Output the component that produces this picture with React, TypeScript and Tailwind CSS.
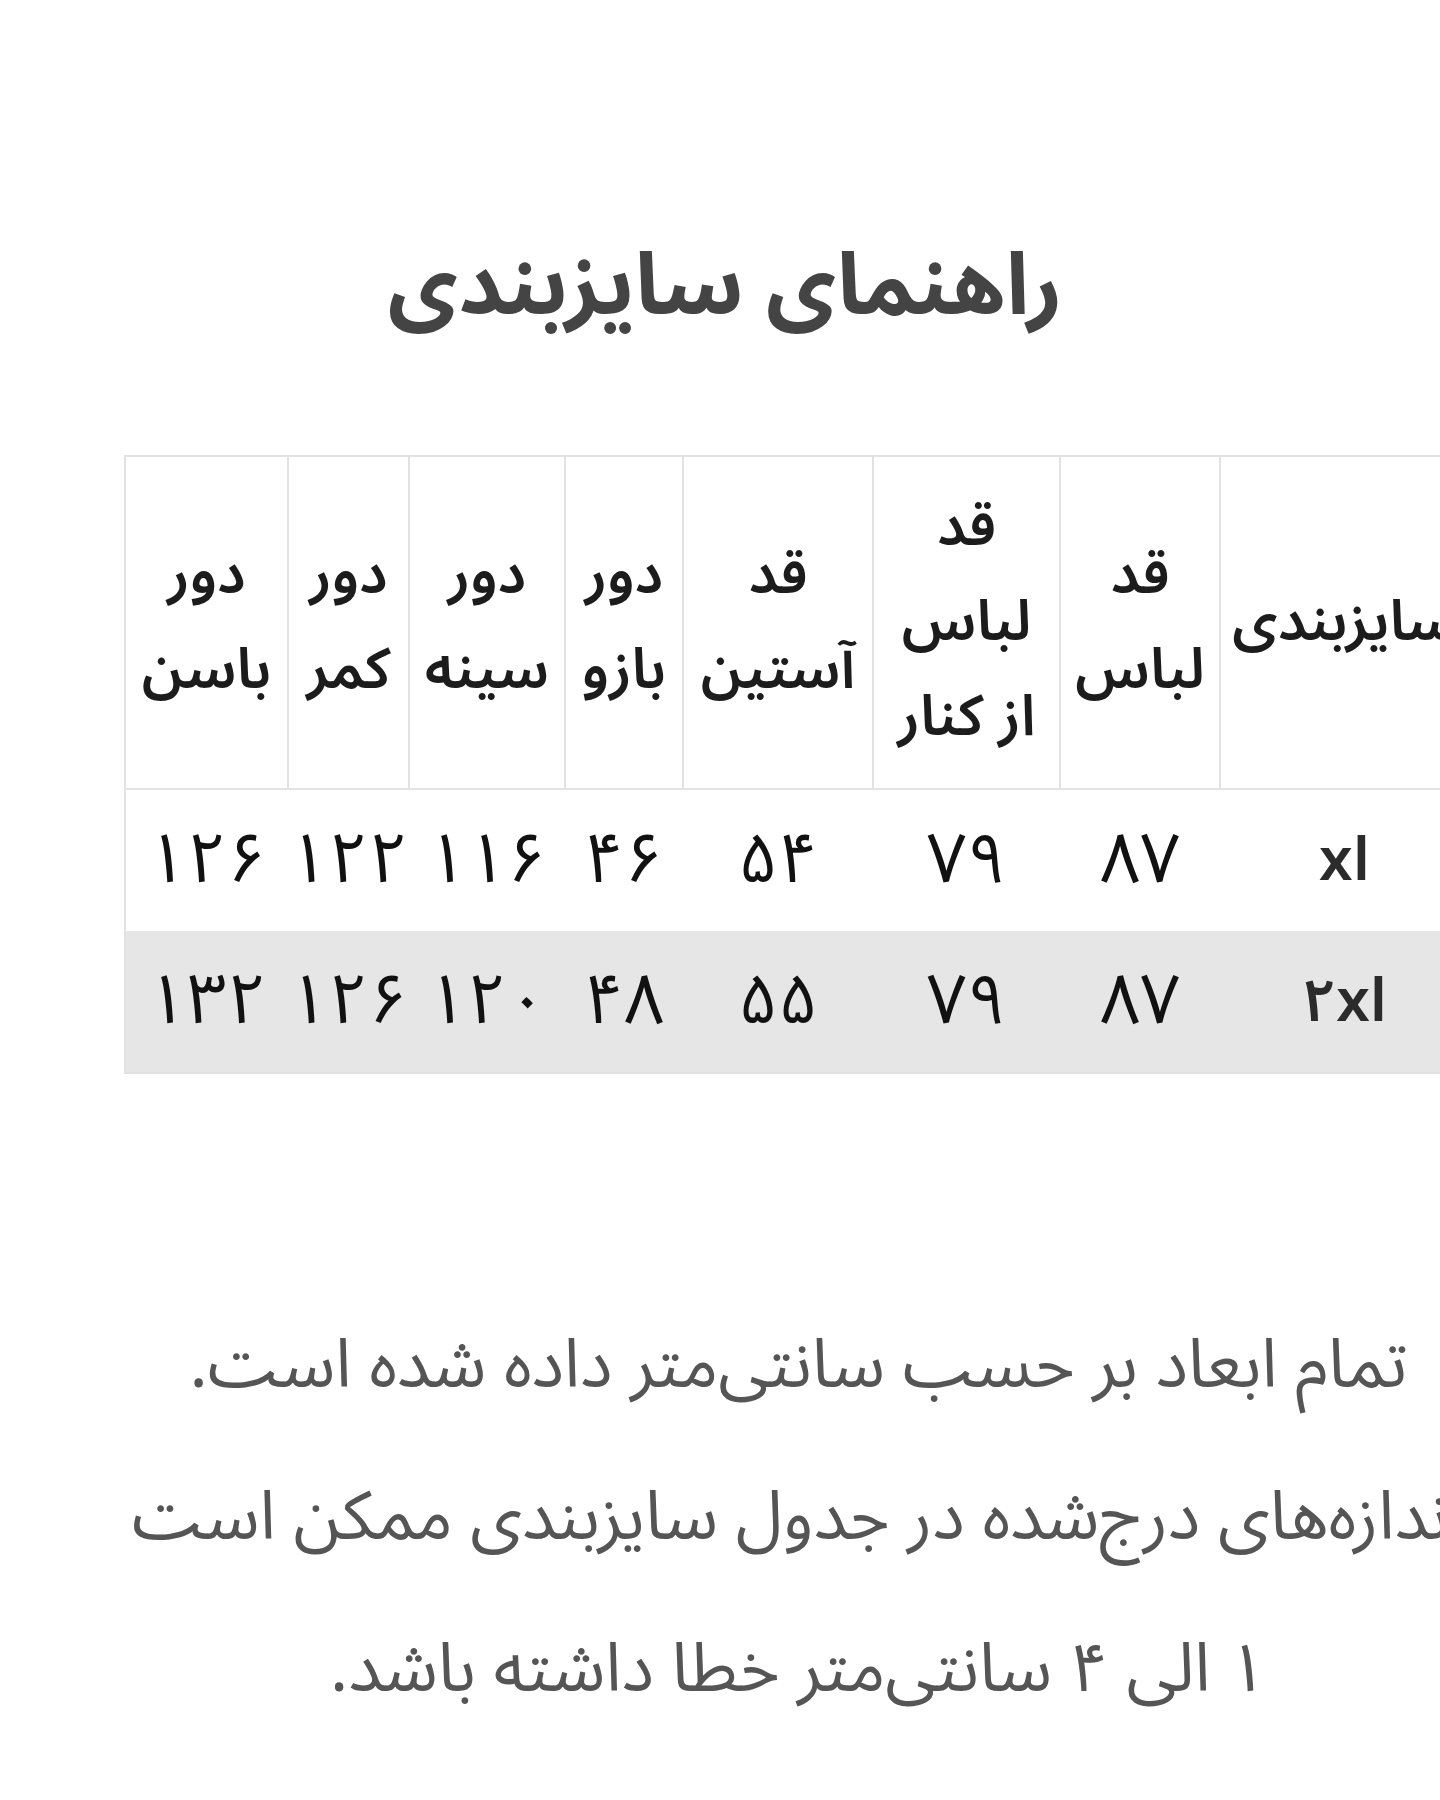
import React from "react";

const FONT = { fontFamily: '"Noto Sans Arabic", "Vazirmatn", "DejaVu Sans", sans-serif' };

const headers: React.ReactNode[] = [
  <>سایزبندی</>,
  <>قد<br />لباس</>,
  <>قد<br />لباس<br />از کنار</>,
  <>قد<br />آستین</>,
  <>دور<br />بازو</>,
  <>دور<br />سینه</>,
  <>دور<br />کمر</>,
  <>دور<br />باسن</>,
];

const widths = ["w-[250px]", "w-[160px]", "w-[187px]", "w-[190px]", "w-[118px]", "w-[156px]", "w-[121px]", "w-[163px]"];

const rows = [
  ["xl", "۸۷", "۷۹", "۵۴", "۴۶", "۱۱۶", "۱۲۲", "۱۲۶"],
  ["۲xl", "۸۷", "۷۹", "۵۵", "۴۸", "۱۲۰", "۱۲۶", "۱۳۲"],
];

export default function App() {
  return (
    <div className="w-[1440px] min-h-[1800px] overflow-hidden bg-white" style={FONT}>
      <h1
        dir="rtl"
        className="mt-[229px] h-[116px] text-center text-[86px] leading-[116px] font-bold text-[#444444] pl-[10px]"
      >
        راهنمای سایزبندی
      </h1>
      <div dir="rtl" className="ml-[126px] w-[1345px] mt-[110px]">
        <table className="w-[1345px] table-fixed border-collapse border-2 border-[#e2e2e2]">
          <colgroup>
            {widths.map((w, i) => (
              <col key={i} className={w} />
            ))}
          </colgroup>
          <thead>
            <tr className="h-[333px]">
              {headers.map((h, i) => (
                <th
                  key={i}
                  className="border-2 border-[#e2e2e2] text-center align-middle text-[57px] leading-[95px] font-semibold text-[#1c1c1c] whitespace-nowrap px-0"
                >
                  {h}
                </th>
              ))}
            </tr>
          </thead>
          <tbody>
            {rows.map((r, ri) => (
              <tr key={ri} className={ri === 1 ? "h-[142px] bg-[#e6e6e6]" : "h-[142px] bg-white"}>
                {r.map((c, ci) => (
                  <td
                    key={ci}
                    className={
                      ci === 0
                        ? "text-center align-middle text-[60px] font-semibold text-[#2b2b2b] whitespace-nowrap"
                        : "text-center align-middle text-[70px] tracking-[-4px] text-[#111111] whitespace-nowrap"
                    }
                  >
                    {c}
                  </td>
                ))}
              </tr>
            ))}
          </tbody>
        </table>
        <div className="mt-[216px] text-center text-[#555555] text-[68px]">
          <p className="leading-[152px] whitespace-nowrap">تمام ابعاد بر حسب سانتی‌متر داده شده است.</p>
          <p className="leading-[152px] whitespace-nowrap">اندازه‌های درج‌شده در جدول سایزبندی ممکن است</p>
          <p className="leading-[152px] whitespace-nowrap">۱ الی ۴ سانتی‌متر خطا داشته باشد.</p>
        </div>
      </div>
    </div>
  );
}
